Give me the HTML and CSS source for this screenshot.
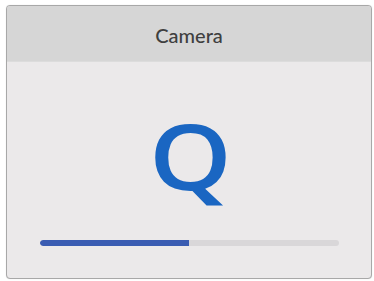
FILE: index.html
```html
<!DOCTYPE html>
<html>
<head>
<meta charset="utf-8">
<link rel="stylesheet" href="styles.css">
</head>
<body>
<div class="card">
  <div class="header">Camera</div>
  <div class="body">
    <div class="glyph">Q</div>
    <div class="track"><div class="fill" style="width:50%"></div></div>
  </div>
</div>
</body>
</html>
```

FILE: styles.css
```css
html, body { margin: 0; padding: 0; background: #ffffff; }
body { padding: 5px 2px 2px 6px; width: 374px; height: 281px; box-sizing: border-box; }
.card {
  width: 366px; height: 274px; box-sizing: border-box;
  border: 1px solid #a8a8a8; border-radius: 4px; overflow: hidden;
  display: flex; flex-direction: column;
  background: #ebe9ea;
  box-shadow: 0 0 1px #cfcfcf;
}
.header {
  height: 56px; flex: none; background: #d6d6d6;
  border-bottom: 1px solid #dcdcdc;
  display: flex; align-items: center; justify-content: center;
  font-family: "Lato", "Open Sans", sans-serif; font-size: 20px; font-weight: 500;
  color: #3f3f3f; padding-top: 2px; box-sizing: border-box;
}
.body { flex: 1; display: flex; flex-direction: column; align-items: center; }
.glyph {
  margin-top: 43px; height: 100px; line-height: 100px;
  font-family: "Open Sans", sans-serif; font-weight: 600; font-size: 90px; color: #1a66c2;
  transform: translateX(1px) scaleX(1.17);
}
.track {
  margin-top: 35px; width: 299px; height: 6px; border-radius: 3px; background: #d9d7d9;
  overflow: hidden;
}
.fill { height: 100%; background: #3a5cb2; border-radius: 3px 0 0 3px; }
```
